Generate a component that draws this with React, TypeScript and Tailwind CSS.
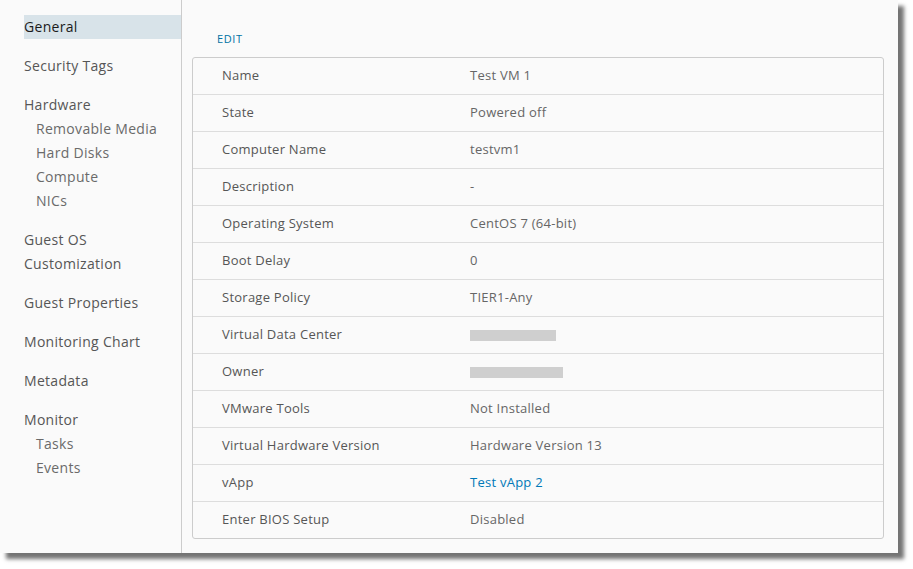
import React from "react";

type Row = { label: string; value?: string; link?: boolean; redact?: number };

const ROWS: Row[] = [
  { label: "Name", value: "Test VM 1" },
  { label: "State", value: "Powered off" },
  { label: "Computer Name", value: "testvm1" },
  { label: "Description", value: "-" },
  { label: "Operating System", value: "CentOS 7 (64-bit)" },
  { label: "Boot Delay", value: "0" },
  { label: "Storage Policy", value: "TIER1-Any" },
  { label: "Virtual Data Center", redact: 86 },
  { label: "Owner", redact: 93 },
  { label: "VMware Tools", value: "Not Installed" },
  { label: "Virtual Hardware Version", value: "Hardware Version 13" },
  { label: "vApp", value: "Test vApp 2", link: true },
  { label: "Enter BIOS Setup", value: "Disabled" },
];

const NAV: { title: string; active?: boolean; children?: string[] }[] = [
  { title: "General", active: true },
  { title: "Security Tags" },
  { title: "Hardware", children: ["Removable Media", "Hard Disks", "Compute", "NICs"] },
  { title: "Guest OS Customization" },
  { title: "Guest Properties" },
  { title: "Monitoring Chart" },
  { title: "Metadata" },
  { title: "Monitor", children: ["Tasks", "Events"] },
];

export default function App() {
  return (
    <div className="w-[913px] h-[569px] bg-white" style={{ fontFamily: '"Open Sans", sans-serif' }}>
      <div className="w-[898px] h-[553px] bg-[#fafafa] flex shadow-[6px_6px_4px_rgba(0,0,0,0.55)]">
        {/* side nav */}
        <nav className="w-[182px] shrink-0 border-r border-[#cccccc] pt-[15px] pl-[24px] flex flex-col gap-[15px] tracking-[0.3px]">
          {NAV.map((g) => (
            <div key={g.title}>
              <div
                className={
                  "leading-[24px] text-[14px] " +
                  (g.active ? "bg-[#d8e3e9] text-[#1b1b1b]" : "text-[#565656]")
                }
              >
                {g.title}
              </div>
              {g.children?.map((c) => (
                <div key={c} className="pl-[12px] leading-[24px] text-[14px] text-[#6a6a6a]">
                  {c}
                </div>
              ))}
            </div>
          ))}
        </nav>

        {/* main */}
        <main className="flex-1 pl-[10px] pr-[14px] pt-[32px]">
          <div className="pl-[25px] text-[11px] tracking-[0.6px] text-[#0072a3] leading-[14px]">EDIT</div>
          <div className="mt-[11px] border border-[#cccccc] rounded-[3px] bg-[#fafafa] tracking-[0.25px]">
            {ROWS.map((r, i) => (
              <div
                key={r.label}
                className={
                  "flex items-center text-[13px] " +
                  (i > 0 ? "h-[37px] border-t border-[#dddddd]" : "h-[36px]")
                }
              >
                <div className="w-[277px] pl-[29px] text-[#565656]">{r.label}</div>
                {r.redact ? (
                  <div className="h-[11px] bg-[#cfcfcf]" style={{ width: r.redact }} />
                ) : (
                  <div className={r.link ? "text-[#0079b8]" : "text-[#666666]"}>{r.value}</div>
                )}
              </div>
            ))}
          </div>
        </main>
      </div>
    </div>
  );
}
